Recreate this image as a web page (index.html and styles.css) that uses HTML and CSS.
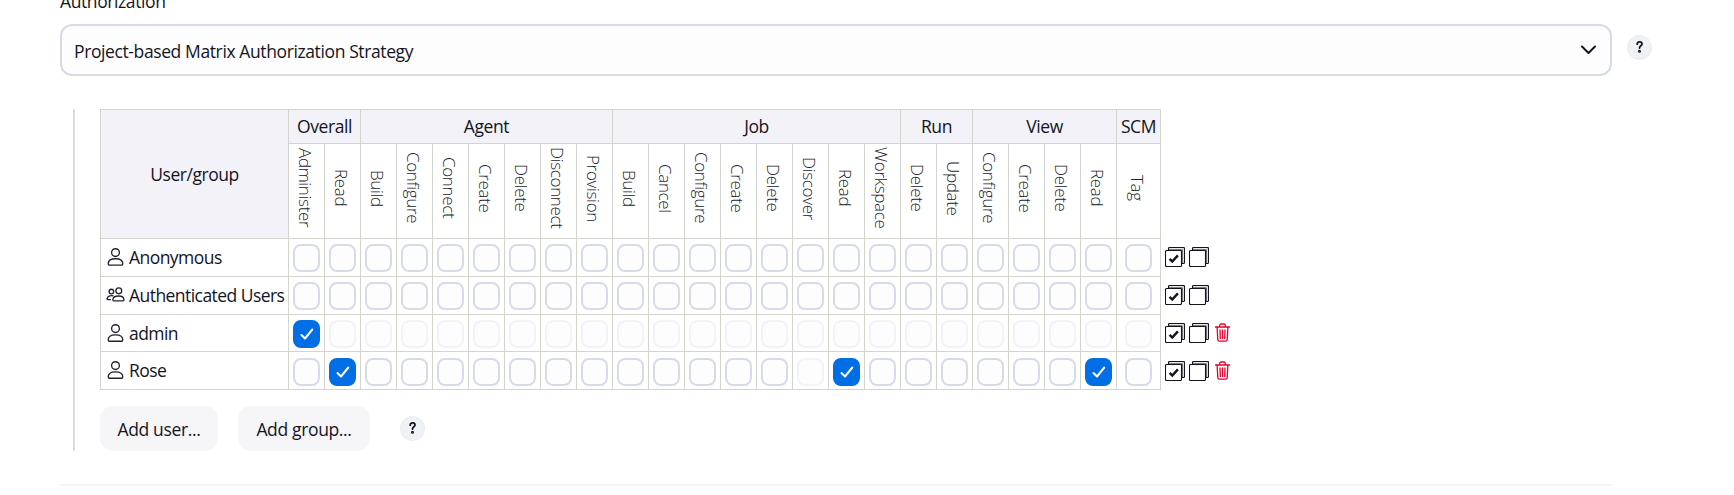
FILE: index.html
```html
<!DOCTYPE html>
<html lang="en">
<head>
<meta charset="utf-8">
<title>Authorization</title>
<link rel="stylesheet" href="styles.css">
</head>
<body>
<svg class="sprite" aria-hidden="true">
  <symbol id="person" viewBox="0 0 16 18"><circle cx="8" cy="4.600" r="3.900"/><path d="M.7 15.700c0-3 2.700-4.900 7.300-4.900s7.300 1.900 7.300 4.900c0 .900-.4 1.500-1.300 1.500H2c-.9 0-1.300-.6-1.300-1.500z"/></symbol>
  <symbol id="people" viewBox="0 0 18 15"><circle cx="12.300" cy="3.800" r="2.900"/><path d="M6.300 12.800c.2-2.600 2.500-3.800 5.800-3.800s5.200 1.200 5.400 3.800c0 .7-.3 1-1 1H7.300c-.7 0-1-.3-1-1zM7 8.800c-3.700-.7-6.100.5-6.400 2.900 0 .7.200.9.900.9h2.900"/><circle cx="4.900" cy="4.500" r="2.300"/></symbol>
  <symbol id="all" viewBox="0 0 20 20"><path class="back" d="M3.500 3V1.500Q3.500 .5 4.500 .5H18.500Q19.500.5 19.500 1.500V15.500Q19.500 16.500 18.500 16.500H17V3z"/><rect class="front" x=".5" y="3.500" width="16" height="16" rx="1"/><path class="tick" d="M4.600 11.800l2.700 2.800 5.600-6.200"/></symbol>
  <symbol id="none" viewBox="0 0 20 20"><path class="back" d="M3.500 3V1.500Q3.500 .5 4.500 .5H18.500Q19.500.5 19.500 1.500V15.500Q19.500 16.500 18.500 16.500H17V3z"/><rect class="front" x=".5" y="3.500" width="16" height="16" rx="1"/></symbol>
  <symbol id="trash" viewBox="0 0 15 19"><path d="M.5 4h14M4.700 3.800V2.400Q4.700 1 6 1h3q1.300 0 1.300 1.400v1.400M2.100 4.200l.7 12.400q.1 1.500 1.500 1.500h6.400q1.400 0 1.500-1.500l.7-12.400M5 7l.3 8.400M7.500 7v8.400M10 7l-.3 8.400"/></symbol>
  <symbol id="help" viewBox="0 0 25 25"><path d="M10.200 9.200c.1-1.500 1-2.300 2.400-2.300s2.400.8 2.400 2c0 1.900-2.500 1.900-2.500 4.100"/><circle cx="12.500" cy="16.200" r=".6"/></symbol>
</svg>
<main class="page">
  <div class="label">Authorization</div>
  <div class="strategy">
    <div class="select"><span>Project-based Matrix Authorization Strategy</span><svg class="chevron" viewBox="0 0 15 10"><path d="M1 1.500l6.500 6.500L14 1.500"/></svg></div>
    <span class="help"><svg><use href="#help"/></svg></span>
  </div>
  <section class="nested">
    <div class="matrix" id="matrix"></div>
    <div class="actions">
      <button class="button user">Add user...</button>
      <button class="button group">Add group...</button>
      <span class="help"><svg><use href="#help"/></svg></span>
    </div>
  </section>
  <div class="rule"></div>
</main>
<script src="matrix.js"></script>
</body>
</html>
```
FILE: styles.css
```css
* { box-sizing: border-box; }
body { margin: 0; background: #fff; color: #14141f; font: 17.5px/24px "Open Sans", "Noto Sans", sans-serif; overflow: hidden; }
.sprite { display: none; }
.page { padding-left: 60px; height: 495px; overflow: hidden; }
.label { height: 24px; line-height: 24px; margin-top: -11px; letter-spacing: -.4px; }
.strategy { display: flex; gap: 15px; margin-top: 11px; }
.select { width: 1552px; height: 52px; border: 2px solid #d6dbe8; border-radius: 12px; background: #fdfdfd; display: flex; align-items: center; justify-content: space-between; padding: 0 14px 0 12px; letter-spacing: -.39px; }
.select span { padding-top: 2px; }
.chevron { width: 15px; height: 10px; fill: none; stroke: #14141f; stroke-width: 2; stroke-linecap: round; stroke-linejoin: round; }
.help { width: 25px; height: 25px; margin-top: 11px; border-radius: 50%; background: #eef1f5; border: 1px solid #e8edf2; display: flex; }
.help svg { width: 25px; height: 25px; margin: -1px; flex: none; fill: none; stroke: #14141f; stroke-width: 1.8; stroke-linecap: round; }
.nested { margin: 33px 0 0 13px; height: 342px; border-left: 2px solid #d8dceb; padding-left: 25px; }
.matrix { display: grid; width: max-content; grid-template-columns: 188px repeat(23, 36px) 44px auto; grid-template-rows: 34px 95px 38px 38px 37px 38px; border-left: 1px solid #d4d4ce; padding-top: 1px; background: linear-gradient(#d4d4ce, #d4d4ce) 0 0 / 1060px 1px no-repeat; }
.cell { border-right: 1px solid #d4d4ce; border-bottom: 1px solid #d4d4ce; display: flex; justify-content: center; min-width: 0; }
.corner { grid-row: span 2; background: #f3f2f8; align-items: center; letter-spacing: -.45px; }
.head { background: #f3f2f8; align-items: center; letter-spacing: -.4px; padding-bottom: 1px; }
.perm { writing-mode: vertical-rl; align-items: center; justify-content: center; font-weight: 300; font-size: 17px; color: #22222e; padding: 0 3px 6px 0; letter-spacing: -.33px; }
.name { justify-content: flex-start; align-items: center; padding: 0 0 1px 5px; letter-spacing: -.55px; white-space: nowrap; }
.name svg { fill: none; stroke: #22222e; stroke-width: 1.35; flex: none; width: 19px; height: 18px; margin-right: 4px; }
.name .people { height: 15px; margin-top: -1px; }
.box { width: 27px; height: 28px; margin-top: 5px; border: 2px solid #d6dce7; border-radius: 8px; background: #fdfdfe; }
.last .box { margin-top: 6px; }
.box.off { border-color: #f2f3f8; }
.box.on { background: #006fe6; border-color: #006fe6; display: flex; align-items: center; justify-content: center; }
.box svg { width: 14px; height: 12px; fill: none; stroke: #fff; stroke-width: 2; stroke-linecap: round; stroke-linejoin: round; }
.tools { display: flex; gap: 4px; padding: 8px 0 0 4px; }
.tools.last { padding-top: 9px; }
.tools svg { width: 20px; height: 20px; fill: none; stroke: #14141f; stroke-width: 1.1; }
.tools .del { width: 15px; height: 19px; margin: 0 0 0 1.5px; stroke: #e6002b; stroke-width: 1.3; stroke-linecap: round; }
.back { fill: #e8e8ea; }
.front { fill: #fff; }
.tick { stroke-width: 2.4; }
.actions { display: flex; margin-top: 16px; }
.button { height: 45px; border: 0; border-radius: 13px; background: #f6f6f9; color: #14141f; font: inherit; letter-spacing: -.35px; padding: 1px 0 0; }
.user { width: 118px; margin-right: 20px; }
.group { width: 132px; margin-right: 30px; }
.actions .help { margin-top: 10px; }
.rule { width: 1552px; height: 2px; background: #f3f3f9; margin-top: 33px; }
```
FILE: matrix.js
```js
const groups = [
  ["Overall", ["Administer", "Read"]],
  ["Agent", ["Build", "Configure", "Connect", "Create", "Delete", "Disconnect", "Provision"]],
  ["Job", ["Build", "Cancel", "Configure", "Create", "Delete", "Discover", "Read", "Workspace"]],
  ["Run", ["Delete", "Update"]],
  ["View", ["Configure", "Create", "Delete", "Read"]],
  ["SCM", ["Tag"]]
];
const rows = [
  { name: "Anonymous", icon: "person", on: [], off: () => false },
  { name: "Authenticated Users", icon: "people", on: [], off: () => false },
  { name: "admin", icon: "person", on: [0], off: () => true, removable: true },
  { name: "Rose", icon: "person", on: [1, 15, 22], off: i => i === 14, removable: true, last: true }
];
const icon = (id, cls = "") => `<svg class="${cls}"><use href="#${id}"/></svg>`;
const check = '<svg viewBox="0 0 14 12"><path d="M1.500 7l3.500 3.500L12.300 1.500"/></svg>';
const perms = groups.flatMap(g => g[1]);
let html = '<div class="cell corner">User/group</div>';
groups.forEach(([title, list]) => {
  html += `<div class="cell head" style="grid-column: span ${list.length}">${title}</div>`;
});
html += '<div></div>';
perms.forEach(p => { html += `<div class="cell perm">${p}</div>`; });
html += '<div></div>';
rows.forEach(r => {
  const last = r.last ? " last" : "";
  html += `<div class="cell name">${icon(r.icon, r.icon)}${r.name}</div>`;
  perms.forEach((p, i) => {
    const on = r.on.includes(i);
    const state = on ? " on" : r.off(i) ? " off" : "";
    html += `<div class="cell${last}"><span class="box${state}">${on ? check : ""}</span></div>`;
  });
  html += `<div class="tools${last}">${icon("all")}${icon("none")}${r.removable ? icon("trash", "del") : ""}</div>`;
});
document.getElementById("matrix").innerHTML = html;
```
